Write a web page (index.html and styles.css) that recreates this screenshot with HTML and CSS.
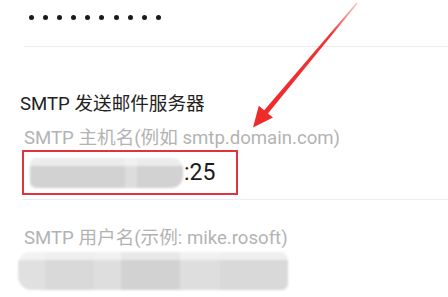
FILE: index.html
```html
<!DOCTYPE html>
<html lang="zh-CN">
<head>
<meta charset="utf-8">
<link rel="stylesheet" href="styles.css">
</head>
<body>
<div class="page">
  <div class="pw-row">
    <div class="dots">
      <span></span><span></span><span></span><span></span><span></span>
      <span></span><span></span><span></span><span></span><span></span>
    </div>
  </div>

  <div class="section-title">SMTP 发送邮件服务器</div>

  <div class="field">
    <div class="label">SMTP 主机名(例如 smtp.domain.com)</div>
    <div class="value-row">
      <div class="highlight">
        <div class="mask mask-host"></div>
        <span class="port">:25</span>
      </div>
    </div>
  </div>

  <div class="field field-user">
    <div class="label">SMTP 用户名(示例: mike.rosoft)</div>
    <div class="mask mask-user"></div>
  </div>

  <svg class="arrow" width="448" height="297" viewBox="0 0 448 297">
    <defs>
      <linearGradient id="ag" x1="357" y1="3" x2="253" y2="127" gradientUnits="userSpaceOnUse">
        <stop offset="0" stop-color="#f25050" stop-opacity="0.35"/>
        <stop offset="0.25" stop-color="#f03434"/>
        <stop offset="1" stop-color="#ee2a2a"/>
      </linearGradient>
    </defs>
    <polygon fill="url(#ag)" points="356.6,2.6 357.6,3.4 268,113.4 273,117.6 253,127.5 258.8,105.8 264.2,110.2"/>
  </svg>
</div>
</body>
</html>
```

FILE: styles.css
```css
html, body {
  margin: 0;
  padding: 0;
  background: #ffffff;
}

.page {
  position: relative;
  width: 448px;
  height: 297px;
  overflow: hidden;
  font-family: Roboto, "Noto Sans CJK SC", sans-serif;
}

.pw-row {
  margin-left: 24px;
  height: 47px;
  border-bottom: 1px solid #ececec;
  box-sizing: border-box;
  padding-top: 14.5px;
  padding-left: 4.5px;
}

.dots {
  display: flex;
  gap: 9.2px;
}

.dots span {
  width: 5px;
  height: 5px;
  border-radius: 50%;
  background: #1a1a1a;
}

.section-title {
  margin: 45px 0 0 20px;
  font-size: 18.6px;
  line-height: 25px;
  color: #222222;
}

.field {
  margin-left: 22px;
  border-bottom: 1px solid #ececec;
}

.label {
  margin: 9px 0 0 2px;
  font-size: 18.6px;
  line-height: 24px;
  color: #b3b3b3;
}

.value-row {
  padding: 0 0 4px 0;
  margin-top: 0;
}

.highlight {
  width: 216px;
  height: 45px;
  box-sizing: border-box;
  border: 2px solid #e2323e;
  display: flex;
  align-items: center;
  padding-left: 6px;
}

.mask {
  background:
    linear-gradient(to right, rgba(255,255,255,0) 0 62%, rgba(255,255,255,0.25) 62% 70%, rgba(255,255,255,0) 70% 100%),
    linear-gradient(to bottom, #ececec 0 28%, #d2d2d2 28% 100%);
  filter: blur(1.2px);
}

.mask-host {
  width: 153px;
  height: 30px;
  border-radius: 6px 10px 12px 6px;
}

.port {
  font-size: 23px;
  line-height: 26px;
  color: #1c1c1c;
  margin-left: 1px;
}

.field-user {
  border-bottom: none;
  margin-left: 18px;
}

.field-user .label {
  margin: 26px 0 0 6px;
}

.mask-user {
  margin-top: 2px;
  width: 270px;
  height: 38px;
  border-radius: 12px 8px 6px 14px;
  background:
    linear-gradient(to right, rgba(255,255,255,0.2) 0 10%, rgba(255,255,255,0) 10% 28%, rgba(255,255,255,0.15) 28% 38%, rgba(0,0,0,0.03) 38% 60%, rgba(255,255,255,0.15) 60% 75%, rgba(255,255,255,0) 75% 100%),
    linear-gradient(to bottom, #efefef 0 22%, #d9d9d9 22% 100%);
}

.arrow {
  position: absolute;
  left: 0;
  top: 0;
  pointer-events: none;
}
```
